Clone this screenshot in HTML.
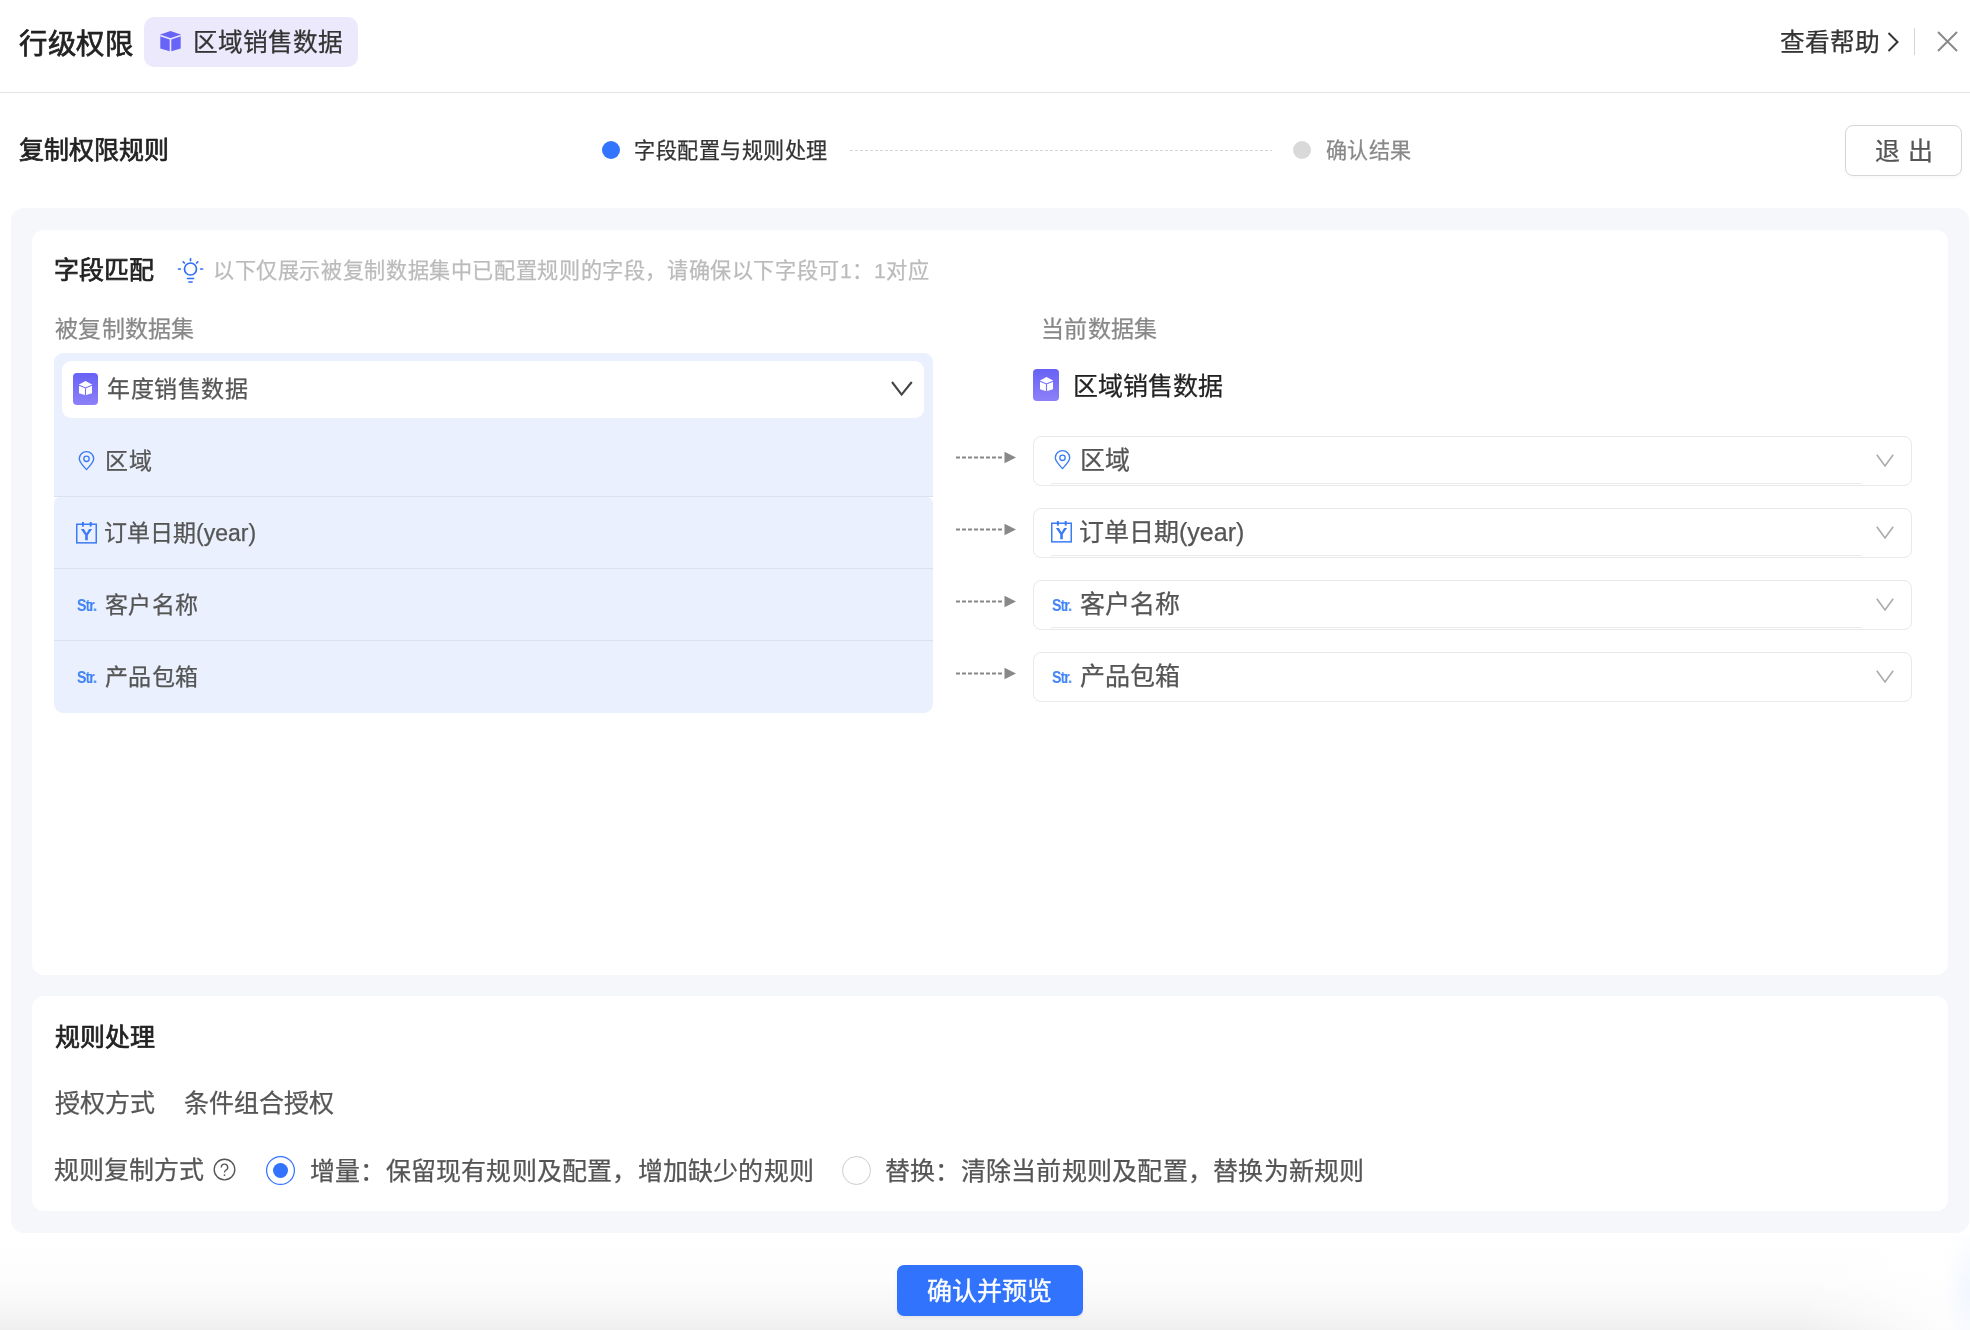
<!DOCTYPE html>
<html lang="zh-CN"><head><meta charset="utf-8">
<style>
*{box-sizing:border-box;margin:0;padding:0}
html,body{width:1970px;height:1330px;overflow:hidden;background:#fff;font-family:"Liberation Sans",sans-serif;color:#333}
.a{position:absolute}
.t{position:absolute;white-space:nowrap;line-height:1;will-change:transform;-webkit-text-stroke-width:0.25px}
svg{position:absolute;overflow:visible}
</style></head>
<body>
<!-- bottom gradient -->
<div class="a" style="left:0;top:1236px;width:1970px;height:94px;background:linear-gradient(to bottom,#ffffff 0%,#fdfdfd 45%,#f6f6f6 80%,#efefef 100%)"></div>
<div class="a" style="left:1800px;top:1236px;width:170px;height:94px;background:linear-gradient(to right,rgba(255,255,255,0) 0%,rgba(255,255,255,0.8) 80%,rgba(252,253,255,0.95) 100%)"></div>
<div class="a" style="left:1945px;top:1236px;width:25px;height:94px;background:radial-gradient(ellipse 25px 55px at 100% 60%,rgba(230,238,255,0.45),rgba(230,238,255,0))"></div>

<!-- header -->
<div class="t" style="left:18.8px;top:29.6px;font-size:28.4px;letter-spacing:0.55px;color:#222;-webkit-text-stroke:0.7px #222">行级权限</div>
<div class="a" style="left:144px;top:17px;width:214px;height:50px;border-radius:10px;background:#ede9fc"></div>
<svg style="left:160px;top:31px" width="21" height="21" viewBox="0 0 21 21">
  <path d="M10.5 -0.1 L20.7 3.5 V17.4 L10.5 20.6 L0.3 17.4 V3.5 Z" fill="#6764f7"/>
  <path d="M0.3 4.4 L10.5 7.9 L20.7 4.4 M10.5 7.9 V21" stroke="#ede9fc" stroke-width="1.6" fill="none"/>
</svg>
<div class="t" style="left:193px;top:31px;font-size:24.7px;color:#333">区域销售数据</div>

<div class="t" style="left:1779.8px;top:30.9px;font-size:24.7px;color:#333">查看帮助</div>
<svg style="left:1887px;top:32px" width="12" height="20" viewBox="0 0 12 20"><path d="M1.5 1 L10.5 10 L1.5 19" stroke="#333" stroke-width="2" fill="none"/></svg>
<div class="a" style="left:1914px;top:28px;width:1px;height:27px;background:#d5d5d5"></div>
<svg style="left:1937px;top:31px" width="21" height="21" viewBox="0 0 21 21"><path d="M1 1 L20 20 M20 1 L1 20" stroke="#8a8a8a" stroke-width="2" fill="none"/></svg>
<div class="a" style="left:0;top:92px;width:1970px;height:1px;background:#e2e2e2"></div>

<!-- sub header -->
<div class="t" style="left:18.7px;top:137.7px;font-size:25px;color:#222;-webkit-text-stroke:0.7px #222">复制权限规则</div>
<div class="a" style="left:602px;top:141px;width:18px;height:18px;border-radius:50%;background:#3274fd"></div>
<div class="t" style="left:634.3px;top:140px;font-size:21.1px;letter-spacing:0.54px;color:#333">字段配置与规则处理</div>
<svg style="left:850px;top:150px" width="424" height="2"><line x1="0" y1="0.5" x2="422" y2="0.5" stroke="#d5d5d5" stroke-width="1" stroke-dasharray="3 2"/></svg>
<div class="a" style="left:1293px;top:141px;width:18px;height:18px;border-radius:50%;background:#d9d9d9"></div>
<div class="t" style="left:1326px;top:140px;font-size:21.1px;letter-spacing:0.43px;color:#888">确认结果</div>
<div class="a" style="left:1845px;top:125px;width:117px;height:51px;border-radius:8px;border:1px solid #d6d6d6;background:#fff;box-shadow:0 2px 3px rgba(0,0,0,0.03)"></div>
<div class="t" style="left:1875px;top:138.7px;font-size:25px;color:#555;letter-spacing:7.6px">退出</div>

<!-- gray panel -->
<div class="a" style="left:11px;top:208px;width:1958px;height:1025px;border-radius:13px;background:#f5f7fb"></div>
<div class="a" style="left:32px;top:230px;width:1916px;height:745px;border-radius:12px;background:#fff"></div>
<div class="a" style="left:32px;top:996px;width:1916px;height:215px;border-radius:12px;background:#fff"></div>

<!-- field match -->
<div class="t" style="left:54.3px;top:257.7px;font-size:25px;color:#222;-webkit-text-stroke:0.7px #222">字段匹配</div>
<svg style="left:177px;top:258px" width="27" height="26" viewBox="0 0 27 26">
  <g stroke="#2f6ef7" stroke-width="1.7" fill="none" stroke-linecap="round">
    <circle cx="13.5" cy="11" r="6"/>
    <line x1="13.5" y1="0.8" x2="13.5" y2="2.6"/>
    <line x1="6.2" y1="3.8" x2="7.4" y2="5"/>
    <line x1="20.8" y1="3.8" x2="19.6" y2="5"/>
    <line x1="1.5" y1="11" x2="3.3" y2="11"/>
    <line x1="23.7" y1="11" x2="25.5" y2="11"/>
    <line x1="10.5" y1="20.5" x2="16.5" y2="20.5"/>
    <line x1="12" y1="24" x2="15" y2="24"/>
  </g>
</svg>
<div class="t" style="left:212.8px;top:260px;font-size:21.13px;letter-spacing:0.62px;color:#bbb">以下仅展示被复制数据集中已配置规则的字段，请确保以下字段可1：1对应</div>
<div class="t" style="left:55px;top:317.8px;font-size:23px;color:#888;letter-spacing:0.3px">被复制数据集</div>
<div class="t" style="left:1041.4px;top:317.8px;font-size:23px;color:#888;letter-spacing:0.35px">当前数据集</div>

<!-- left panel -->
<div class="a" style="left:54px;top:353px;width:879px;height:144px;border-radius:9px 9px 0 0;background:#eaf0fd"></div>
<div class="a" style="left:54px;top:497px;width:879px;height:216px;border-radius:6px 6px 9px 9px;background:#eaf0fd"></div>
<div class="a" style="left:62px;top:360.5px;width:862px;height:57px;border-radius:9px;background:#fff"></div>
<div class="a" style="left:73px;top:373px;width:25px;height:32px;border-radius:4px;background:linear-gradient(to bottom,#6762f6,#8d80f8)"></div>
<svg style="left:79px;top:381.3px" width="13" height="14" viewBox="0 0 13 14">
  <path d="M6.5 0 L13 3.5 V12.3 L6.5 14.2 L0 12.3 V3.5 Z" fill="#fff"/>
  <path d="M0 4.2 L6.5 6.9 L13 4.2 M6.5 6.9 V14.5" stroke="#7470f7" stroke-width="1.1" fill="none"/>
</svg>
<div class="t" style="left:107.4px;top:378px;font-size:23px;color:#555;letter-spacing:0.5px">年度销售数据</div>
<svg style="left:891px;top:381px" width="22" height="16" viewBox="0 0 22 16"><path d="M1 1 L10.6 13.6 L20.8 1" stroke="#444" stroke-width="2.1" fill="none"/></svg>

<div class="a" style="left:54px;top:496px;width:879px;height:1px;background:#d9e0ee"></div>
<div class="a" style="left:54px;top:568px;width:879px;height:1px;background:#d9e0ee"></div>
<div class="a" style="left:54px;top:640px;width:879px;height:1px;background:#d9e0ee"></div>

<!-- left rows icons -->
<svg style="left:78px;top:450.5px" width="17" height="20" viewBox="0 0 17 20">
  <path d="M8.5 18.6 C4.6 14.5 1.3 11.1 1.3 7.8 A7.2 7.2 0 0 1 15.7 7.8 C15.7 11.1 12.4 14.5 8.5 18.6 Z" stroke="#3b7bf6" stroke-width="1.35" fill="none" stroke-linejoin="round"/>
  <circle cx="8.5" cy="7.8" r="2.7" stroke="#3b7bf6" stroke-width="1.35" fill="none"/>
</svg>
<div class="t" style="left:104.5px;top:450px;font-size:23px;color:#555;letter-spacing:0.6px">区域</div>

<svg style="left:76px;top:522px" width="21" height="21" viewBox="0 0 21 21">
  <rect x="0.75" y="2.25" width="19.5" height="18.6" stroke="#3b7bf6" stroke-width="1.5" fill="none"/>
  <line x1="6.9" y1="0" x2="6.9" y2="4.6" stroke="#3b7bf6" stroke-width="2"/>
  <line x1="14.7" y1="0" x2="14.7" y2="4.6" stroke="#3b7bf6" stroke-width="2"/>
  <path d="M4.9 6.9 H7.9 L10.5 11.2 L13.1 6.9 H16.1 L11.8 13.3 V18.2 H9.2 V13.3 Z" fill="#3b7bf6"/>
</svg>
<div class="t" style="left:104px;top:522.4px;font-size:23px;color:#555">订单日期(year)</div>

<div class="t" style="left:77px;top:597.5px;font-size:16px;font-weight:700;color:#3f82f7;letter-spacing:-1px;-webkit-text-stroke-width:0;transform:scaleX(0.88);transform-origin:0 0">Str.</div>
<div class="t" style="left:104.5px;top:594.1px;font-size:23px;color:#555;letter-spacing:0.45px">客户名称</div>
<div class="t" style="left:77px;top:669.5px;font-size:16px;font-weight:700;color:#3f82f7;letter-spacing:-1px;-webkit-text-stroke-width:0;transform:scaleX(0.88);transform-origin:0 0">Str.</div>
<div class="t" style="left:104.5px;top:666px;font-size:23px;color:#555;letter-spacing:0.45px">产品包箱</div>

<!-- right -->
<div class="a" style="left:1033px;top:369px;width:26px;height:32px;border-radius:4px;background:linear-gradient(to bottom,#6762f6,#8d80f8)"></div>
<svg style="left:1039.5px;top:377.3px" width="13" height="14" viewBox="0 0 13 14">
  <path d="M6.5 0 L13 3.5 V12.3 L6.5 14.2 L0 12.3 V3.5 Z" fill="#fff"/>
  <path d="M0 4.2 L6.5 6.9 L13 4.2 M6.5 6.9 V14.5" stroke="#7470f7" stroke-width="1.1" fill="none"/>
</svg>
<div class="t" style="left:1073.2px;top:373.8px;font-size:25px;color:#222">区域销售数据</div>

<!-- arrows -->
<svg style="left:955px;top:451px" width="62" height="12" viewBox="0 0 62 12"><line x1="1" y1="6.5" x2="47" y2="6.5" stroke="#888" stroke-width="2" stroke-dasharray="4 2"/><path d="M49.5 0.8 L61 6.5 L49.5 12.2 Z" fill="#888"/></svg>
<svg style="left:955px;top:523px" width="62" height="12" viewBox="0 0 62 12"><line x1="1" y1="6.5" x2="47" y2="6.5" stroke="#888" stroke-width="2" stroke-dasharray="4 2"/><path d="M49.5 0.8 L61 6.5 L49.5 12.2 Z" fill="#888"/></svg>
<svg style="left:955px;top:595px" width="62" height="12" viewBox="0 0 62 12"><line x1="1" y1="6.5" x2="47" y2="6.5" stroke="#888" stroke-width="2" stroke-dasharray="4 2"/><path d="M49.5 0.8 L61 6.5 L49.5 12.2 Z" fill="#888"/></svg>
<svg style="left:955px;top:667px" width="62" height="12" viewBox="0 0 62 12"><line x1="1" y1="6.5" x2="47" y2="6.5" stroke="#888" stroke-width="2" stroke-dasharray="4 2"/><path d="M49.5 0.8 L61 6.5 L49.5 12.2 Z" fill="#888"/></svg>

<!-- right selects -->
<div class="a" style="left:1033px;top:436px;width:879px;height:50px;border-radius:8px;border:1px solid #e9e9e9"></div>
<div class="a" style="left:1051px;top:483px;width:811px;height:1px;background:#ececec"></div>
<div class="a" style="left:1033px;top:508px;width:879px;height:50px;border-radius:8px;border:1px solid #e9e9e9"></div>
<div class="a" style="left:1051px;top:555px;width:811px;height:1px;background:#ececec"></div>
<div class="a" style="left:1033px;top:580px;width:879px;height:50px;border-radius:8px;border:1px solid #e9e9e9"></div>
<div class="a" style="left:1051px;top:627px;width:811px;height:1px;background:#ececec"></div>
<div class="a" style="left:1033px;top:652px;width:879px;height:50px;border-radius:8px;border:1px solid #e9e9e9"></div>

<svg style="left:1876px;top:454px" width="18" height="13" viewBox="0 0 18 13"><path d="M0.8 0.8 L9 12 L17.2 0.8" stroke="#aaa" stroke-width="1.6" fill="none"/></svg>
<svg style="left:1876px;top:526px" width="18" height="13" viewBox="0 0 18 13"><path d="M0.8 0.8 L9 12 L17.2 0.8" stroke="#aaa" stroke-width="1.6" fill="none"/></svg>
<svg style="left:1876px;top:598px" width="18" height="13" viewBox="0 0 18 13"><path d="M0.8 0.8 L9 12 L17.2 0.8" stroke="#aaa" stroke-width="1.6" fill="none"/></svg>
<svg style="left:1876px;top:670px" width="18" height="13" viewBox="0 0 18 13"><path d="M0.8 0.8 L9 12 L17.2 0.8" stroke="#aaa" stroke-width="1.6" fill="none"/></svg>

<svg style="left:1053.5px;top:449.5px" width="17" height="20" viewBox="0 0 17 20">
  <path d="M8.5 18.6 C4.6 14.5 1.3 11.1 1.3 7.8 A7.2 7.2 0 0 1 15.7 7.8 C15.7 11.1 12.4 14.5 8.5 18.6 Z" stroke="#3b7bf6" stroke-width="1.35" fill="none" stroke-linejoin="round"/>
  <circle cx="8.5" cy="7.8" r="2.7" stroke="#3b7bf6" stroke-width="1.35" fill="none"/>
</svg>
<div class="t" style="left:1080px;top:448px;font-size:25px;color:#555">区域</div>

<svg style="left:1051px;top:521px" width="21" height="21" viewBox="0 0 21 21">
  <rect x="0.75" y="2.25" width="19.5" height="18.6" stroke="#3b7bf6" stroke-width="1.5" fill="none"/>
  <line x1="6.9" y1="0" x2="6.9" y2="4.6" stroke="#3b7bf6" stroke-width="2"/>
  <line x1="14.7" y1="0" x2="14.7" y2="4.6" stroke="#3b7bf6" stroke-width="2"/>
  <path d="M4.9 6.9 H7.9 L10.5 11.2 L13.1 6.9 H16.1 L11.8 13.3 V18.2 H9.2 V13.3 Z" fill="#3b7bf6"/>
</svg>
<div class="t" style="left:1078.7px;top:519.6px;font-size:25px;color:#555">订单日期(year)</div>

<div class="t" style="left:1052px;top:597.5px;font-size:16px;font-weight:700;color:#3f82f7;letter-spacing:-1px;-webkit-text-stroke-width:0;transform:scaleX(0.88);transform-origin:0 0">Str.</div>
<div class="t" style="left:1079.5px;top:591.5px;font-size:25px;color:#555">客户名称</div>
<div class="t" style="left:1052px;top:669.5px;font-size:16px;font-weight:700;color:#3f82f7;letter-spacing:-1px;-webkit-text-stroke-width:0;transform:scaleX(0.88);transform-origin:0 0">Str.</div>
<div class="t" style="left:1079.5px;top:663.5px;font-size:25px;color:#555">产品包箱</div>

<!-- rules -->
<div class="t" style="left:54.5px;top:1025.4px;font-size:25px;color:#222;-webkit-text-stroke:0.7px #222">规则处理</div>
<div class="t" style="left:54.5px;top:1091.4px;font-size:25px;color:#555">授权方式</div>
<div class="t" style="left:184px;top:1091.4px;font-size:25px;color:#555">条件组合授权</div>
<div class="t" style="left:54px;top:1158px;font-size:25px;color:#555">规则复制方式</div>
<svg style="left:213px;top:1158px" width="23" height="23" viewBox="0 0 23 23">
  <circle cx="11.5" cy="11.5" r="10.3" stroke="#555" stroke-width="1.35" fill="none"/>
  <path d="M8.3 9.5 A3.2 3.2 0 1 1 12.7 12.3 C11.9 12.8 11.5 13.3 11.5 14.4" stroke="#555" stroke-width="1.35" fill="none"/>
  <circle cx="11.5" cy="17.1" r="0.95" fill="#555"/>
</svg>
<svg style="left:266px;top:1156px" width="29" height="29" viewBox="0 0 29 29"><circle cx="14.5" cy="14.5" r="13.9" stroke="#3274fd" stroke-width="1.25" fill="#fff"/></svg>
<div class="a" style="left:273px;top:1163px;width:15px;height:15px;border-radius:50%;background:#3274fd"></div>
<div class="t" style="left:309.8px;top:1159.3px;font-size:25px;color:#555;letter-spacing:0.2px">增量：保留现有规则及配置，增加缺少的规则</div>
<svg style="left:842px;top:1156px" width="29" height="29" viewBox="0 0 29 29"><circle cx="14.5" cy="14.5" r="14" stroke="#cdcdcd" stroke-width="1" fill="#fff"/></svg>
<div class="t" style="left:885px;top:1159.2px;font-size:25px;color:#555;letter-spacing:0.24px">替换：清除当前规则及配置，替换为新规则</div>

<!-- button -->
<div class="a" style="left:897px;top:1265px;width:186px;height:51px;border-radius:7px;background:#3273fd;box-shadow:0 2px 3px rgba(0,0,0,0.06)"></div>
<div class="t" style="left:927px;top:1279px;font-size:25px;color:#fff;-webkit-text-stroke:0.4px #fff">确认并预览</div>
</body></html>
